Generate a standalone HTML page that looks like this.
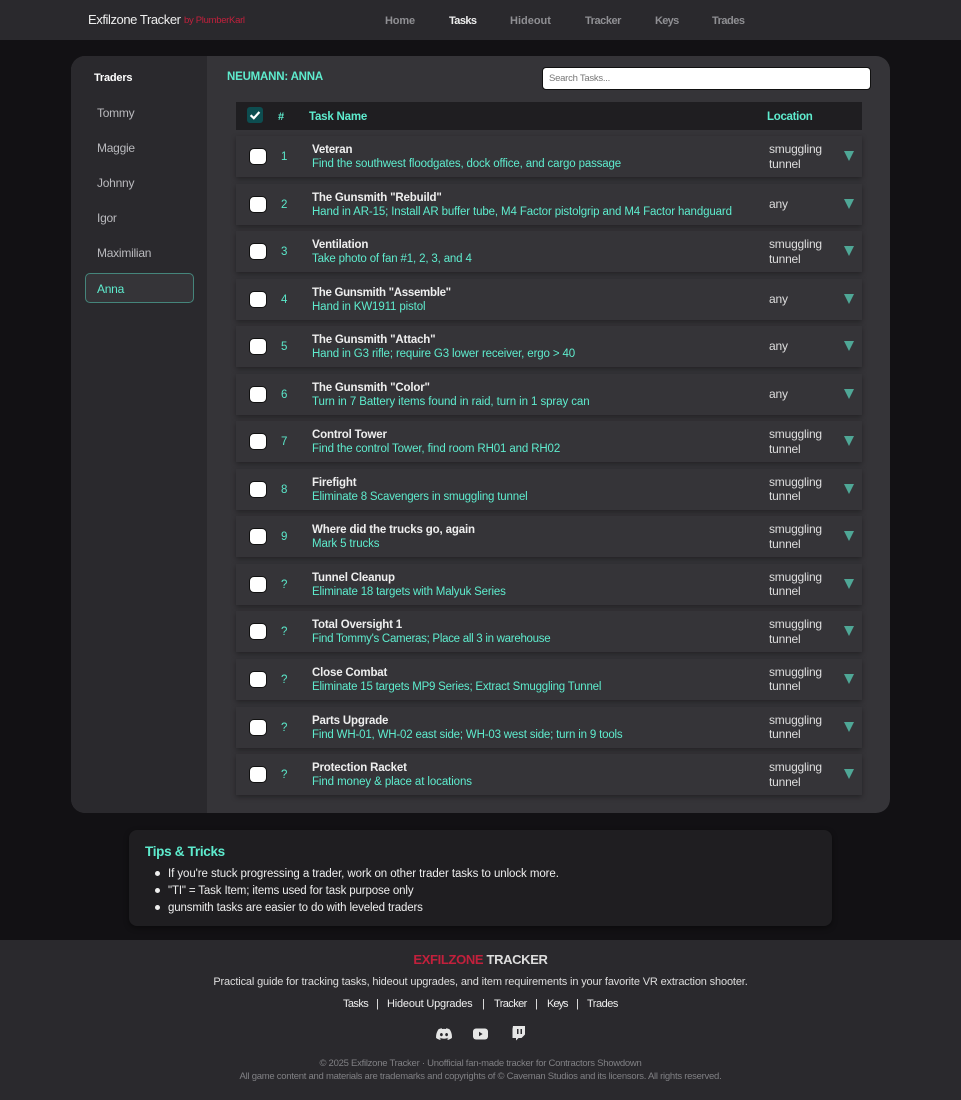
<!DOCTYPE html>
<html><head><meta charset="utf-8"><title>Exfilzone Tracker</title>
<style>
*{box-sizing:border-box}
html,body{margin:0;padding:0}
body{width:961px;height:1100px;position:relative;overflow:hidden;background:#121114;font-family:"Liberation Sans",sans-serif;color:#eee;font-size:13px}
.a{position:absolute;white-space:nowrap;line-height:16px}
.b{font-weight:700}
.nav{position:absolute;left:0;top:0;width:961px;height:40px;background:#2a292d}
.nl{top:13px;font-weight:700;font-size:11px;letter-spacing:-.15px;color:#8f8f93}
.panel{position:absolute;left:71px;top:56px;width:819px;height:757px;background:#353438;border-radius:14px;overflow:hidden}
.side{position:absolute;left:0;top:0;width:136px;height:757px;background:#2a292d}
.tr{left:97px;font-size:12px;color:#b9b9bd;letter-spacing:-.25px}
.row{position:absolute;left:236px;width:626px;height:41px;background:#353438;box-shadow:0 2px 5px rgba(0,0,0,.35)}
.cb{position:absolute;left:12.500px;top:12px;width:18px;height:17px;background:#fff;border-radius:5px;border:1px solid #111}
.n{position:absolute;left:45px;top:13px;color:#5ae8ca;font-size:11.500px;font-weight:400;line-height:16px}
.t{position:absolute;left:76px;top:7px;font-weight:700;font-size:11.500px;line-height:15px;color:#eee;white-space:nowrap;letter-spacing:-.18px}
.d{position:absolute;left:76px;top:21px;font-size:11.500px;line-height:15px;color:#5eecce;white-space:nowrap;letter-spacing:-.13px}
.l{position:absolute;left:533px;top:6px;font-size:12px;line-height:14.500px;color:#ddd;white-space:nowrap;letter-spacing:-.2px}
.l.o{top:13px}
.arr{position:absolute;left:608px;top:15px;width:0;height:0;border-left:5.500px solid transparent;border-right:5.500px solid transparent;border-top:10px solid #4fa796}
.fl{top:996px;font-size:11px;color:#eee;letter-spacing:-.2px}
.li{left:168px;font-size:11.500px;letter-spacing:-.08px}
</style></head><body>

<div class="nav"></div>
<div class="a" style="left:88px;top:12px;font-size:13px;color:#eee;letter-spacing:-.42px">Exfilzone Tracker</div>
<div class="a" style="left:184px;top:13px;font-size:9.500px;color:#c2203c;letter-spacing:-.3px">by PlumberKarl</div>
<div class="a nl" style="left:385px">Home</div>
<div class="a nl" style="left:449px;color:#eee;letter-spacing:-.6px">Tasks</div>
<div class="a nl" style="left:510px;letter-spacing:0">Hideout</div>
<div class="a nl" style="left:585px;letter-spacing:-.45px">Tracker</div>
<div class="a nl" style="left:655px;letter-spacing:-.7px">Keys</div>
<div class="a nl" style="left:712px;letter-spacing:-.5px">Trades</div>

<div class="panel"><div class="side"></div></div>
<div class="a b" style="left:94px;top:70px;font-size:11px;color:#fff;letter-spacing:-.2px">Traders</div>
<div class="a tr" style="top:105px">Tommy</div>
<div class="a tr" style="top:140px">Maggie</div>
<div class="a tr" style="top:175px">Johnny</div>
<div class="a tr" style="top:210px">Igor</div>
<div class="a tr" style="top:245px">Maximilian</div>
<div style="position:absolute;left:85px;top:273px;width:109px;height:30px;background:#353438;border:1px solid #45857b;border-radius:5px"></div>
<div class="a tr" style="top:281px;color:#5eecce">Anna</div>

<div class="a b" style="left:227px;top:69px;font-size:11.500px;color:#5eecce;letter-spacing:-.2px">NEUMANN: ANNA</div>
<div style="position:absolute;left:542px;top:67px;width:329px;height:23px;background:#fff;border:1px solid #111;border-radius:4px"></div>
<div class="a" style="left:549px;top:71px;font-size:9.500px;color:#777;letter-spacing:-.25px">Search Tasks...</div>

<div style="position:absolute;left:236px;top:102px;width:626px;height:28px;background:#1f1e21"></div>
<div style="position:absolute;left:247px;top:107px;width:16px;height:16px;background:#0d4d50;border-radius:3px"></div>
<svg style="position:absolute;left:247px;top:107px" width="16" height="16" viewBox="0 0 16 16"><path d="M3.600 8.200 6.800 11.200 12.400 5" fill="none" stroke="#fff" stroke-width="2.200"/></svg>
<div class="a b" style="left:278px;top:109px;font-size:11px;color:#5eecce">#</div>
<div class="a b" style="left:309px;top:109px;font-size:11.500px;color:#5eecce;letter-spacing:-.2px">Task Name</div>
<div class="a b" style="left:767px;top:109px;font-size:11.500px;color:#5eecce;letter-spacing:-.3px">Location</div>

<div class="row" style="top:136px"><div class="cb"></div><div class="n">1</div><div class="t">Veteran</div><div class="d" style="letter-spacing:-.15px">Find the southwest floodgates, dock office, and cargo passage</div><div class="l">smuggling<br>tunnel</div><div class="arr"></div></div>
<div class="row" style="top:183.500px"><div class="cb"></div><div class="n">2</div><div class="t">The Gunsmith "Rebuild"</div><div class="d">Hand in AR-15; Install AR buffer tube, M4 Factor pistolgrip and M4 Factor handguard</div><div class="l o">any</div><div class="arr"></div></div>
<div class="row" style="top:231px"><div class="cb"></div><div class="n">3</div><div class="t">Ventilation</div><div class="d" style="letter-spacing:-.16px">Take photo of fan #1, 2, 3, and 4</div><div class="l">smuggling<br>tunnel</div><div class="arr"></div></div>
<div class="row" style="top:278.600px"><div class="cb"></div><div class="n">4</div><div class="t" style="letter-spacing:-.3px">The Gunsmith "Assemble"</div><div class="d">Hand in KW1911 pistol</div><div class="l o">any</div><div class="arr"></div></div>
<div class="row" style="top:326.200px"><div class="cb"></div><div class="n">5</div><div class="t">The Gunsmith "Attach"</div><div class="d">Hand in G3 rifle; require G3 lower receiver, ergo &gt; 40</div><div class="l o">any</div><div class="arr"></div></div>
<div class="row" style="top:373.700px"><div class="cb"></div><div class="n">6</div><div class="t">The Gunsmith "Color"</div><div class="d" style="letter-spacing:-.09px">Turn in 7 Battery items found in raid, turn in 1 spray can</div><div class="l o">any</div><div class="arr"></div></div>
<div class="row" style="top:421.200px"><div class="cb"></div><div class="n">7</div><div class="t">Control Tower</div><div class="d">Find the control Tower, find room RH01 and RH02</div><div class="l">smuggling<br>tunnel</div><div class="arr"></div></div>
<div class="row" style="top:468.800px"><div class="cb"></div><div class="n">8</div><div class="t">Firefight</div><div class="d" style="letter-spacing:-.18px">Eliminate 8 Scavengers in smuggling tunnel</div><div class="l">smuggling<br>tunnel</div><div class="arr"></div></div>
<div class="row" style="top:516.300px"><div class="cb"></div><div class="n">9</div><div class="t" style="letter-spacing:-.15px">Where did the trucks go, again</div><div class="d">Mark 5 trucks</div><div class="l">smuggling<br>tunnel</div><div class="arr"></div></div>
<div class="row" style="top:563.900px"><div class="cb"></div><div class="n">?</div><div class="t">Tunnel Cleanup</div><div class="d" style="letter-spacing:-.18px">Eliminate 18 targets with Malyuk Series</div><div class="l">smuggling<br>tunnel</div><div class="arr"></div></div>
<div class="row" style="top:611.400px"><div class="cb"></div><div class="n">?</div><div class="t">Total Oversight 1</div><div class="d" style="letter-spacing:-.28px">Find Tommy's Cameras; Place all 3 in warehouse</div><div class="l">smuggling<br>tunnel</div><div class="arr"></div></div>
<div class="row" style="top:658.900px"><div class="cb"></div><div class="n">?</div><div class="t">Close Combat</div><div class="d" style="letter-spacing:-.22px">Eliminate 15 targets MP9 Series; Extract Smuggling Tunnel</div><div class="l">smuggling<br>tunnel</div><div class="arr"></div></div>
<div class="row" style="top:706.500px"><div class="cb"></div><div class="n">?</div><div class="t">Parts Upgrade</div><div class="d" style="letter-spacing:-.18px">Find WH-01, WH-02 east side; WH-03 west side; turn in 9 tools</div><div class="l">smuggling<br>tunnel</div><div class="arr"></div></div>
<div class="row" style="top:754px"><div class="cb"></div><div class="n">?</div><div class="t">Protection Racket</div><div class="d" style="letter-spacing:-.1px">Find money &amp; place at locations</div><div class="l">smuggling<br>tunnel</div><div class="arr"></div></div>

<div style="position:absolute;left:129px;top:830px;width:703px;height:96px;background:#1f1e21;border-radius:8px;box-shadow:0 2px 6px rgba(0,0,0,.4)"></div>
<div class="a b" style="left:145px;top:844px;font-size:13.500px;color:#5eecce;letter-spacing:-.3px">Tips &amp; Tricks</div>
<div class="a li" style="top:866px">If you're stuck progressing a trader, work on other trader tasks to unlock more.</div>
<div class="a li" style="top:883px;letter-spacing:-.14px">"TI" = Task Item; items used for task purpose only</div>
<div class="a li" style="top:900px;letter-spacing:-.14px">gunsmith tasks are easier to do with leveled traders</div>
<div style="position:absolute;left:155px;top:871px;width:5px;height:5px;border-radius:50%;background:#eee"></div>
<div style="position:absolute;left:155px;top:888px;width:5px;height:5px;border-radius:50%;background:#eee"></div>
<div style="position:absolute;left:155px;top:905px;width:5px;height:5px;border-radius:50%;background:#eee"></div>

<div style="position:absolute;left:0;top:940px;width:961px;height:160px;background:#2a292d"></div>
<div class="a b" style="left:0;width:961px;text-align:center;top:952px;font-size:13px;color:#ddd;letter-spacing:-.35px"><span style="color:#c2203c">EXFILZONE</span> TRACKER</div>
<div class="a" style="left:0;width:961px;text-align:center;top:974px;font-size:11px;color:#ddd;letter-spacing:-.15px">Practical guide for tracking tasks, hideout upgrades, and item requirements in your favorite VR extraction shooter.</div>
<div class="a fl" style="left:343px;letter-spacing:-.6px">Tasks</div>
<div class="a fl" style="left:376px">|</div>
<div class="a fl" style="left:387px">Hideout Upgrades</div>
<div class="a fl" style="left:482px">|</div>
<div class="a fl" style="left:494px;letter-spacing:-.6px">Tracker</div>
<div class="a fl" style="left:535px">|</div>
<div class="a fl" style="left:547px;letter-spacing:-1px">Keys</div>
<div class="a fl" style="left:576px">|</div>
<div class="a fl" style="left:587px;letter-spacing:-.5px">Trades</div>

<svg style="position:absolute;left:436px;top:1026px" width="16" height="16" viewBox="0 0 16 16"><path fill="#e6e6e6" d="M13.500 3.200A13 13 0 0 0 10.300 2.200l-.4.8a12 12 0 0 0-3.800 0l-.4-.8a13 13 0 0 0-3.200 1C.4 6.200-.1 9.100.1 12a13 13 0 0 0 4 2l.8-1.300-1.300-.6.300-.3a9.300 9.300 0 0 0 8.200 0l.3.3-1.300.6.8 1.300a13 13 0 0 0 4-2c.3-3.400-.5-6.300-2.400-8.800zM5.400 10.200c-.8 0-1.400-.7-1.400-1.600S4.600 7 5.400 7s1.400.7 1.400 1.600-.6 1.600-1.400 1.600zm5.200 0c-.8 0-1.400-.7-1.400-1.600S9.800 7 10.600 7 12 7.700 12 8.600s-.6 1.600-1.400 1.600z"/></svg>
<svg style="position:absolute;left:472px;top:1026px" width="17" height="16" viewBox="0 0 17 16"><rect x="1" y="2.500" width="15" height="11" rx="3" fill="#e6e6e6"/><path d="M7 5.800v4.400L10.600 8z" fill="#2a292d"/></svg>
<svg style="position:absolute;left:510px;top:1025px" width="16" height="18" viewBox="0 0 16 18"><path fill="#e6e6e6" fill-rule="evenodd" d="M3 1h12v8.500L11.500 13H8.500L6 15.500V13H2.500V4zM7 4v5h1.500V4zm3.500 0v5H12V4z"/></svg>

<div class="a" style="left:0;width:961px;text-align:center;top:1056px;font-size:9.500px;color:#808084;letter-spacing:-.26px">© 2025 Exfilzone Tracker · Unofficial fan-made tracker for Contractors Showdown</div>
<div class="a" style="left:0;width:961px;text-align:center;top:1069px;font-size:9.500px;color:#808084;letter-spacing:-.26px">All game content and materials are trademarks and copyrights of © Caveman Studios and its licensors. All rights reserved.</div>
</body></html>
